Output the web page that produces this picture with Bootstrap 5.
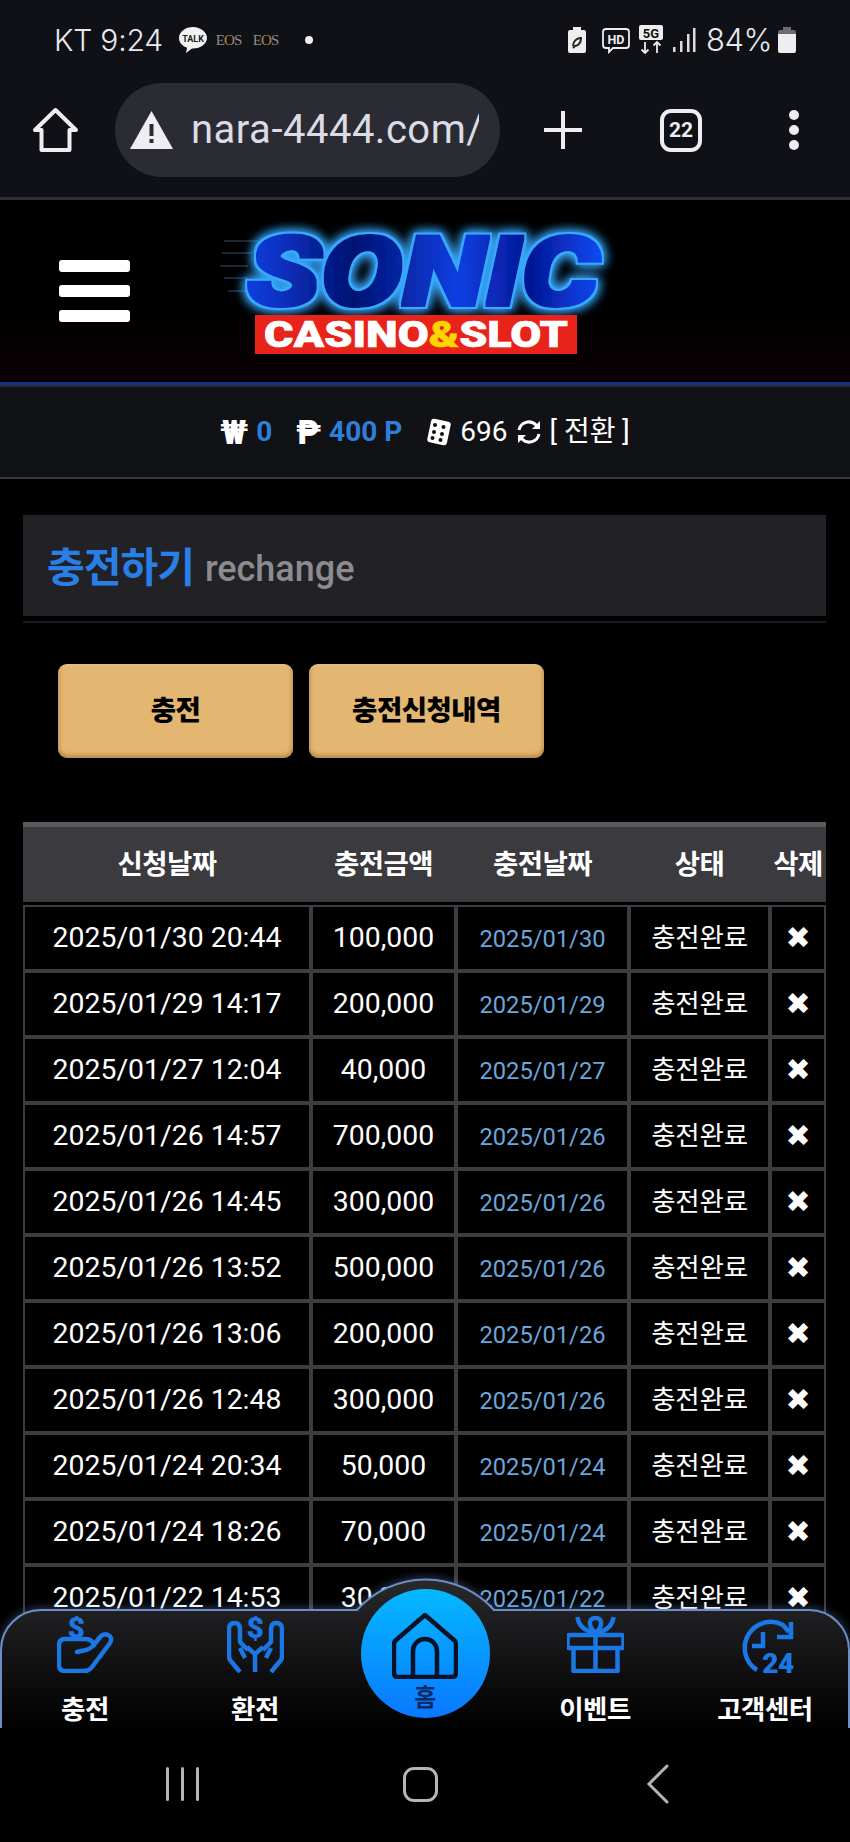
<!doctype html>
<html lang="ko">
<head>
<meta charset="utf-8">
<title>충전하기</title>
<link href="https://cdn.jsdelivr.net/npm/bootstrap@5.3.0/dist/css/bootstrap.min.css" rel="stylesheet">
<style>
html,body{height:100%;margin:0;background:#000}
body{font-family:Roboto,"Noto Sans CJK KR",sans-serif;color:#fff}
.phone{position:relative;height:1842px;width:850px;overflow:hidden;background:#000}
.chrome-top{height:197px;background:#101116;flex:none}
.stat-row{height:80px;padding:0 54px;color:#e9e9ee;font-size:30px;font-family:Inter,Roboto,sans-serif;font-weight:300}
.stat-clock{letter-spacing:-.2px}
.eos-mark{font-family:"Liberation Serif",serif;font-size:15px;letter-spacing:-1px;color:#8d8d8d;width:28px;margin-left:9px;font-weight:400}
.eos-gold{color:#b08d45}
.stat-pct{font-size:31px;margin:0 6px 0 10px;letter-spacing:-.5px}
.tool-row{height:117px;padding-bottom:17px}
.url-pill{width:385px;height:94px;background:#2b2c33;border-radius:47px;margin:0 44px 0 36px;padding:0 18px 0 15px;overflow:hidden}
.url-text{font-size:40px;font-family:Roboto,sans-serif;color:#dcdce4;white-space:nowrap;overflow:hidden;margin-left:18px;width:288px;font-weight:400;letter-spacing:.5px}
.tab-count{width:42px;height:43px;border:4px solid #eeeef2;border-radius:11px;font-size:21px;font-weight:700;color:#eeeef2;margin:0 85px 0 78px;line-height:1}
.site-head{height:188px;flex:none;background:linear-gradient(#000 55%,#0a0004);border-top:3px solid #2d2f33;border-bottom:3px solid #12308c;padding-left:59px}
.burger-bar{width:71px;height:12px;background:#fff;border-radius:3px}
.burger-stack{gap:13px;margin-right:90px}
.cash-bar{height:94px;flex:none;background:#111215;border-top:2px solid #2a2d30;border-bottom:2px solid #37383b;font-size:28px;line-height:1}
.cash-blue{color:#2f7fd9;font-weight:700}
.cash-bold{font-weight:900;color:#fff;font-size:33px}
.page-main{flex:1 1 auto;overflow:hidden;padding:36px 24px 0 23px;background:#000;min-height:0}
.title-panel{height:101px;background:#222226;padding:6px 24px 0;margin-bottom:5px}
.title-main{font-size:41px;font-weight:700;color:#2a7fe6;margin:0 11px 0 0;letter-spacing:-1px;line-height:1}
.title-sub{font-size:36px;font-weight:500;color:#8c8c90;line-height:1}
.title-rule{height:2px;background:#1a1a20}
.btn-gold{width:235px;height:94px;border:0;border-radius:9px;background:#e3b671;color:#000;font-weight:900;font-size:27.500px;letter-spacing:-.5px;box-shadow:inset 0 -3px 4px rgba(130,85,25,.4),inset 0 2px 2px rgba(255,235,190,.3),inset 2px 0 3px rgba(150,105,40,.15),inset -2px 0 3px rgba(150,105,40,.15)}
.btn-gold:hover,.btn-gold:active{background:#e3b671;color:#000}
.btn-row{gap:16px;padding:41px 0 0 35px;margin-bottom:64px}
.rech-table{table-layout:fixed;width:803px;border-collapse:separate;border-spacing:0;margin:0;--bs-table-bg:#000;--bs-table-color:#fff;color:#fff}
.rech-table thead th{height:83px;background:#3a3a3f;border:0;border-top:5px solid #5a5a5e;border-bottom:3px solid #000;padding:0;text-align:center;vertical-align:middle;font-size:27.500px;font-weight:700;color:#fff;box-shadow:none;letter-spacing:-.5px}
.rech-table tbody td{height:66px;border:2px solid #3d3d40;padding:0;text-align:center;vertical-align:middle;background:#000;color:#fff;font-size:28.400px;line-height:1;box-shadow:none;white-space:nowrap}
.rech-table .cell-date{color:#6aa6db;font-size:23.700px;padding-top:3px}
.rech-table .cell-state{font-size:26.500px;letter-spacing:-.2px}
.rech-table .cell-del{font-family:"DejaVu Sans",sans-serif;font-size:30px}
.tab-shell{position:absolute;left:0;right:0;bottom:114px;height:150px}
.tab-svg{position:absolute;inset:0;filter:drop-shadow(0 -1px 5px rgba(120,170,255,.35))}
.tab-item{position:relative;width:170px;padding-top:38px;color:#fff;font-weight:700;font-size:26.500px;letter-spacing:-.5px;text-decoration:none}
.tab-label{margin-top:19px;line-height:36px;white-space:nowrap}
.home-disc{width:129px;height:129px;margin-top:-27px;background:linear-gradient(#05b8ff,#0a78ff);font-size:24px;line-height:1}
.home-label{margin-top:7px;font-weight:700;color:#0b2a66}
.sys-nav{height:114px;flex:none;background:#000;padding:0 0 2px 63px;position:relative;z-index:2}
.sys-cell{width:238px;height:40px}
.sys-bars{gap:12px}
.sys-line{width:3px;height:34px;background:#b5b5b8;border-radius:2px}
.sys-square{width:35px;height:35px;border:3px solid #b5b5b8;border-radius:11px}
</style>
</head>
<body>
<div class="phone d-flex flex-column">

  <div class="chrome-top">
    <div class="stat-row d-flex align-items-center">
      <span class="stat-clock">KT 9:24</span>
      <svg class="ms-3" width="28" height="28" viewBox="0 0 28 28" aria-hidden="true"><path d="M14 1C6.500 1 0 5.800 0 12c0 4.600 3.400 8 8 9.800L7 27l6-4.500h1c7.500 0 14-4.700 14-10.500S21.500 1 14 1z" fill="#f2f2f2"/><text x="14" y="16" text-anchor="middle" font-family="Roboto,sans-serif" font-weight="700" font-size="9" fill="#222">TALK</text></svg>
      <span class="eos-mark">E<span class="eos-gold">O</span>S</span>
      <span class="eos-mark">E<span class="eos-gold">O</span>S</span>
      <svg class="ms-4" width="8" height="8" viewBox="0 0 8 8" aria-hidden="true"><circle cx="4" cy="4" r="4" fill="#eee"/></svg>
      <span class="flex-grow-1"></span>
      <svg width="18" height="26" viewBox="0 0 18 26" aria-hidden="true"><path d="M5 0h8v3h3q2 0 2 2v19q0 2-2 2H2q-2 0-2-2V5q0-2 2-2h3z" fill="#eee"/><path d="M5 19c0-5 4-8 8-8 0 5-3 8-6 8l-2 2" fill="none" stroke="#222" stroke-width="2"/></svg>
      <svg class="ms-3" width="28" height="28" viewBox="0 0 28 28" aria-hidden="true"><path d="M4 3h20q3 0 3 3v13q0 3-3 3H11l-4 4v-4H4q-3 0-3-3V6q0-3 3-3z" fill="none" stroke="#eee" stroke-width="1.800"/><text x="14" y="17.500" text-anchor="middle" font-family="Roboto,sans-serif" font-weight="700" font-size="12.500" fill="#eee">HD</text></svg>
      <svg class="ms-2" width="26" height="30" viewBox="0 0 26 30" aria-hidden="true"><rect x="1" y="0" width="24" height="15" rx="2" fill="#eee"/><text x="13" y="12.500" text-anchor="middle" font-family="Roboto,sans-serif" font-weight="700" font-size="13" fill="#111">5G</text><path d="M7 17v11M3.500 24.500 7 28l3.500-3.500M19 28V17M15.500 20.500 19 17l3.500 3.500" fill="none" stroke="#eee" stroke-width="1.800"/></svg>
      <svg class="ms-2" width="24" height="26" viewBox="0 0 24 26" aria-hidden="true"><rect x="1" y="20" width="2.500" height="5" fill="#ddd"/><rect x="8" y="14" width="2.500" height="11" fill="#ddd"/><rect x="15" y="7" width="2.500" height="18" fill="#ddd"/><rect x="21" y="1" width="2.500" height="24" fill="#ddd"/></svg>
      <span class="stat-pct">84%</span>
      <svg width="18" height="26" viewBox="0 0 18 26" aria-hidden="true"><path d="M5 0h8v3h3q2 0 2 2v4H0V5q0-2 2-2h3z" fill="#6b6b70"/><path d="M0 7h18v17q0 2-2 2H2q-2 0-2-2z" fill="#eee"/></svg>
    </div>
    <div class="tool-row d-flex align-items-center ps-4">
      <svg class="ms-2" width="47" height="46" viewBox="0 0 47 46" aria-hidden="true"><path d="M23.500 3 3 23h6.500v20h28V23H44z" fill="none" stroke="#eeeef2" stroke-width="4" stroke-linejoin="round"/></svg>
      <div class="url-pill d-flex align-items-center">
        <svg width="43" height="38" viewBox="0 0 43 38" aria-hidden="true"><path d="M21.500 0 43 38H0z" fill="#eeeef2"/><rect x="19.500" y="13" width="4" height="12" fill="#2b2c33"/><rect x="19.500" y="28" width="4" height="4" fill="#2b2c33"/></svg>
        <span class="url-text">nara-4444.com/</span>
      </div>
      <svg width="38" height="38" viewBox="0 0 38 38" aria-hidden="true"><path d="M19 0v38M0 19h38" stroke="#eeeef2" stroke-width="4" stroke-linecap="round"/></svg>
      <span class="tab-count d-flex align-items-center justify-content-center">22</span>
      <svg width="14" height="42" viewBox="0 0 14 42" aria-hidden="true"><circle cx="7" cy="6" r="5" fill="#eeeef2"/><circle cx="7" cy="21" r="5" fill="#eeeef2"/><circle cx="7" cy="36" r="5" fill="#eeeef2"/></svg>
    </div>
  </div>

  <header class="site-head d-flex align-items-center">
    <div class="burger-stack d-flex flex-column">
      <span class="burger-bar"></span><span class="burger-bar"></span><span class="burger-bar"></span>
    </div>
    <svg width="398" height="140" viewBox="0 0 398 140" role="img" aria-label="SONIC CASINO&amp;SLOT">
      <defs>
        <linearGradient id="sonicFill" x1="0" y1="0" x2="1" y2="0"><stop offset="0" stop-color="#0a3ee0"/><stop offset=".3" stop-color="#031070"/><stop offset=".6" stop-color="#0a3ee0"/><stop offset=".8" stop-color="#041490"/><stop offset="1" stop-color="#0a48f0"/></linearGradient>
        <filter id="neon" x="-10%" y="-30%" width="120%" height="160%">
          <feMorphology in="SourceAlpha" operator="dilate" radius="3.500" result="fatAlpha"/>
          <feFlood flood-color="#38a8ff"/>
          <feComposite in2="fatAlpha" operator="in" result="rim"/>
          <feGaussianBlur in="rim" stdDeviation="6" result="halo"/>
          <feMorphology in="SourceGraphic" operator="dilate" radius="2" result="core"/>
          <feMerge><feMergeNode in="halo"/><feMergeNode in="halo"/><feMergeNode in="rim"/><feMergeNode in="core"/></feMerge>
        </filter>
      </defs>
      <g stroke="#3a4a70" stroke-width="1"><path d="M4 20h34M2 32h30M0 45h28M4 57h24M8 70h22"/></g>
      <text x="27" y="84" font-family="Roboto,'Liberation Sans',sans-serif" font-weight="900" font-style="italic" font-size="96" textLength="352" lengthAdjust="spacingAndGlyphs" fill="url(#sonicFill)" filter="url(#neon)">SONIC</text>
      <rect x="35" y="94" width="322" height="39" fill="#e8231a"/>
      <text x="44" y="126" font-family="Roboto,'Liberation Sans',sans-serif" font-weight="900" font-size="36" textLength="304" lengthAdjust="spacingAndGlyphs" fill="#fff" stroke="#fff" stroke-width=".6">CASINO<tspan fill="#ffd400" stroke="#ffd400">&amp;</tspan>SLOT</text>
    </svg>
  </header>

  <div class="cash-bar d-flex align-items-center justify-content-center">
    <span class="cash-bold me-2">₩</span><span class="cash-blue">0</span>
    <span class="cash-bold ms-4 me-2">₱</span><span class="cash-blue">400 P</span>
    <svg class="ms-4" width="26" height="28" viewBox="0 0 26 28" aria-hidden="true"><rect x="3" y="2" width="20" height="24" rx="3" transform="rotate(12 13 14)" fill="#fff"/><g fill="#111"><circle cx="9" cy="7" r="2"/><circle cx="17.500" cy="9" r="2"/><circle cx="8" cy="14" r="2"/><circle cx="16" cy="16" r="2"/><circle cx="6.500" cy="20" r="2"/><circle cx="14.500" cy="22" r="2"/></g></svg>
    <span class="ms-2">696</span>
    <svg class="mx-2" width="26" height="26" viewBox="0 0 26 26" aria-hidden="true"><path d="M3 11a10 10 0 0 1 17-5l3 3M23 15a10 10 0 0 1-17 5l-3-3" fill="none" stroke="#fff" stroke-width="3"/><path d="M24 2v8h-8zM2 24v-8h8z" fill="#fff"/></svg>
    <span class="cash-swap">[ 전환 ]</span>
  </div>

  <main class="page-main">
    <div class="title-panel d-flex align-items-center">
      <h1 class="title-main">충전하기</h1>
      <span class="title-sub">rechange</span>
    </div>
    <div class="title-rule"></div>
    <div class="btn-row d-flex">
      <button type="button" class="btn btn-gold">충전</button>
      <button type="button" class="btn btn-gold">충전신청내역</button>
    </div>
    <table class="table rech-table">
      <colgroup><col style="width:288px"><col style="width:145px"><col style="width:173px"><col style="width:141px"><col style="width:56px"></colgroup>
      <thead><tr><th>신청날짜</th><th>충전금액</th><th>충전날짜</th><th>상태</th><th>삭제</th></tr></thead>
      <tbody>
        <tr><td>2025/01/30 20:44</td><td>100,000</td><td class="cell-date">2025/01/30</td><td class="cell-state">충전완료</td><td class="cell-del">✖</td></tr>
        <tr><td>2025/01/29 14:17</td><td>200,000</td><td class="cell-date">2025/01/29</td><td class="cell-state">충전완료</td><td class="cell-del">✖</td></tr>
        <tr><td>2025/01/27 12:04</td><td>40,000</td><td class="cell-date">2025/01/27</td><td class="cell-state">충전완료</td><td class="cell-del">✖</td></tr>
        <tr><td>2025/01/26 14:57</td><td>700,000</td><td class="cell-date">2025/01/26</td><td class="cell-state">충전완료</td><td class="cell-del">✖</td></tr>
        <tr><td>2025/01/26 14:45</td><td>300,000</td><td class="cell-date">2025/01/26</td><td class="cell-state">충전완료</td><td class="cell-del">✖</td></tr>
        <tr><td>2025/01/26 13:52</td><td>500,000</td><td class="cell-date">2025/01/26</td><td class="cell-state">충전완료</td><td class="cell-del">✖</td></tr>
        <tr><td>2025/01/26 13:06</td><td>200,000</td><td class="cell-date">2025/01/26</td><td class="cell-state">충전완료</td><td class="cell-del">✖</td></tr>
        <tr><td>2025/01/26 12:48</td><td>300,000</td><td class="cell-date">2025/01/26</td><td class="cell-state">충전완료</td><td class="cell-del">✖</td></tr>
        <tr><td>2025/01/24 20:34</td><td>50,000</td><td class="cell-date">2025/01/24</td><td class="cell-state">충전완료</td><td class="cell-del">✖</td></tr>
        <tr><td>2025/01/24 18:26</td><td>70,000</td><td class="cell-date">2025/01/24</td><td class="cell-state">충전완료</td><td class="cell-del">✖</td></tr>
        <tr><td>2025/01/22 14:53</td><td>30,000</td><td class="cell-date">2025/01/22</td><td class="cell-state">충전완료</td><td class="cell-del">✖</td></tr>
      </tbody>
    </table>
  </main>

  <div class="sys-nav d-flex align-items-center">
    <div class="sys-cell d-flex justify-content-center align-items-center"><div class="sys-bars d-flex"><span class="sys-line"></span><span class="sys-line"></span><span class="sys-line"></span></div></div>
    <div class="sys-cell d-flex justify-content-center align-items-center"><span class="sys-square"></span></div>
    <div class="sys-cell d-flex justify-content-center align-items-center"><svg width="24" height="40" viewBox="0 0 24 40" aria-hidden="true"><path d="M21 2 3 20l18 18" fill="none" stroke="#b5b5b8" stroke-width="3" stroke-linecap="round"/></svg></div>
  </div>

  <nav class="tab-shell">
    <svg class="tab-svg" width="850" height="150" viewBox="0 0 850 150" aria-hidden="true">
      <defs><linearGradient id="tabFill" x1="0" y1="0" x2="0" y2="1"><stop offset="0" stop-color="#2a2a2c"/><stop offset=".3" stop-color="#1c1c1e"/><stop offset=".95" stop-color="#020203"/></linearGradient></defs>
      <path d="M1 151V72A40 40 0 0 1 41 32H357A92 92 0 0 1 494 32H809A40 40 0 0 1 849 72V151Z" fill="url(#tabFill)" stroke="#6b8fc4" stroke-width="2"/>
    </svg>
    <div class="d-flex position-relative">
      <a class="tab-item d-flex flex-column align-items-center" href="#">
        <svg width="57" height="57" viewBox="0 0 57 57" aria-hidden="true"><text x="19" y="22" text-anchor="middle" font-family="Roboto,sans-serif" font-weight="900" font-size="30" fill="#1a78e6">$</text><path d="M36 27q-2-4-8-4H8q-6 0-6 6v20q0 6 6 6h20q4 0 7-4l18-24q3-6-2-8-4-2-8 2l-7 9q-3 3-7 4l-9 2" fill="none" stroke="#1a78e6" stroke-width="4.500" stroke-linecap="round" stroke-linejoin="round"/></svg>
        <span class="tab-label">충전</span>
      </a>
      <a class="tab-item d-flex flex-column align-items-center" href="#">
        <svg width="57" height="57" viewBox="0 0 57 57" aria-hidden="true"><text x="28" y="22" text-anchor="middle" font-family="Roboto,sans-serif" font-weight="900" font-size="30" fill="#1a78e6">$</text><path d="M13 56 3 44q-1-2-1-4V13q0-6 6-6 5 0 5 7v12l8 8M44 56l10-12q1-2 1-4V13q0-6-6-6-5 0-5 7v12l-8 8M13 32l5 10M44 32l-5 10M28 56V38l-8-7M28 38l8-7" fill="none" stroke="#1a78e6" stroke-width="4.500" stroke-linecap="butt" stroke-linejoin="round"/></svg>
        <span class="tab-label">환전</span>
      </a>
      <a class="tab-item d-flex flex-column align-items-center" href="#">
        <span class="home-disc rounded-circle d-flex flex-column align-items-center pt-4">
          <svg width="66" height="66" viewBox="0 0 66 66" aria-hidden="true"><path d="M33 2 3 28q-1 1-1 3v29q0 4 4 4h54q4 0 4-4V31q0-2-1-3zM21 64V38a12 12 0 0 1 24 0v26" fill="none" stroke="#0a1226" stroke-width="4.500" stroke-linejoin="round"/></svg>
          <span class="home-label">홈</span>
        </span>
      </a>
      <a class="tab-item d-flex flex-column align-items-center" href="#">
        <svg width="57" height="57" viewBox="0 0 57 57" aria-hidden="true"><path d="M10 1c1 9 7 14 18 16 11-2 17-7 18-16M28 17c-7-6-8-15 0-15s7 9 0 15M2 19h52q2 0 2 2v9q0 2-2 2H2q-2 0-2-2v-9q0-2 2-2zM6 32v23h44V32M28 19v36" transform="translate(.5)" fill="none" stroke="#1a78e6" stroke-width="4.500" stroke-linejoin="round"/></svg>
        <span class="tab-label">이벤트</span>
      </a>
      <a class="tab-item d-flex flex-column align-items-center" href="#">
        <svg width="58" height="57" viewBox="0 0 58 57" aria-hidden="true"><path d="M21 54A26 26 0 0 1 47 9l6 7" fill="none" stroke="#1a78e6" stroke-width="4.500"/><path d="M55 6v15H41M27 16v14H16" fill="none" stroke="#1a78e6" stroke-width="4.500"/><text x="42" y="57" text-anchor="middle" font-family="Roboto,sans-serif" font-weight="900" font-size="28" fill="#1a78e6">24</text></svg>
        <span class="tab-label">고객센터</span>
      </a>
    </div>
  </nav>

</div>
<script src="https://cdn.jsdelivr.net/npm/bootstrap@5.3.0/dist/js/bootstrap.bundle.min.js"></script>
</body>
</html>
